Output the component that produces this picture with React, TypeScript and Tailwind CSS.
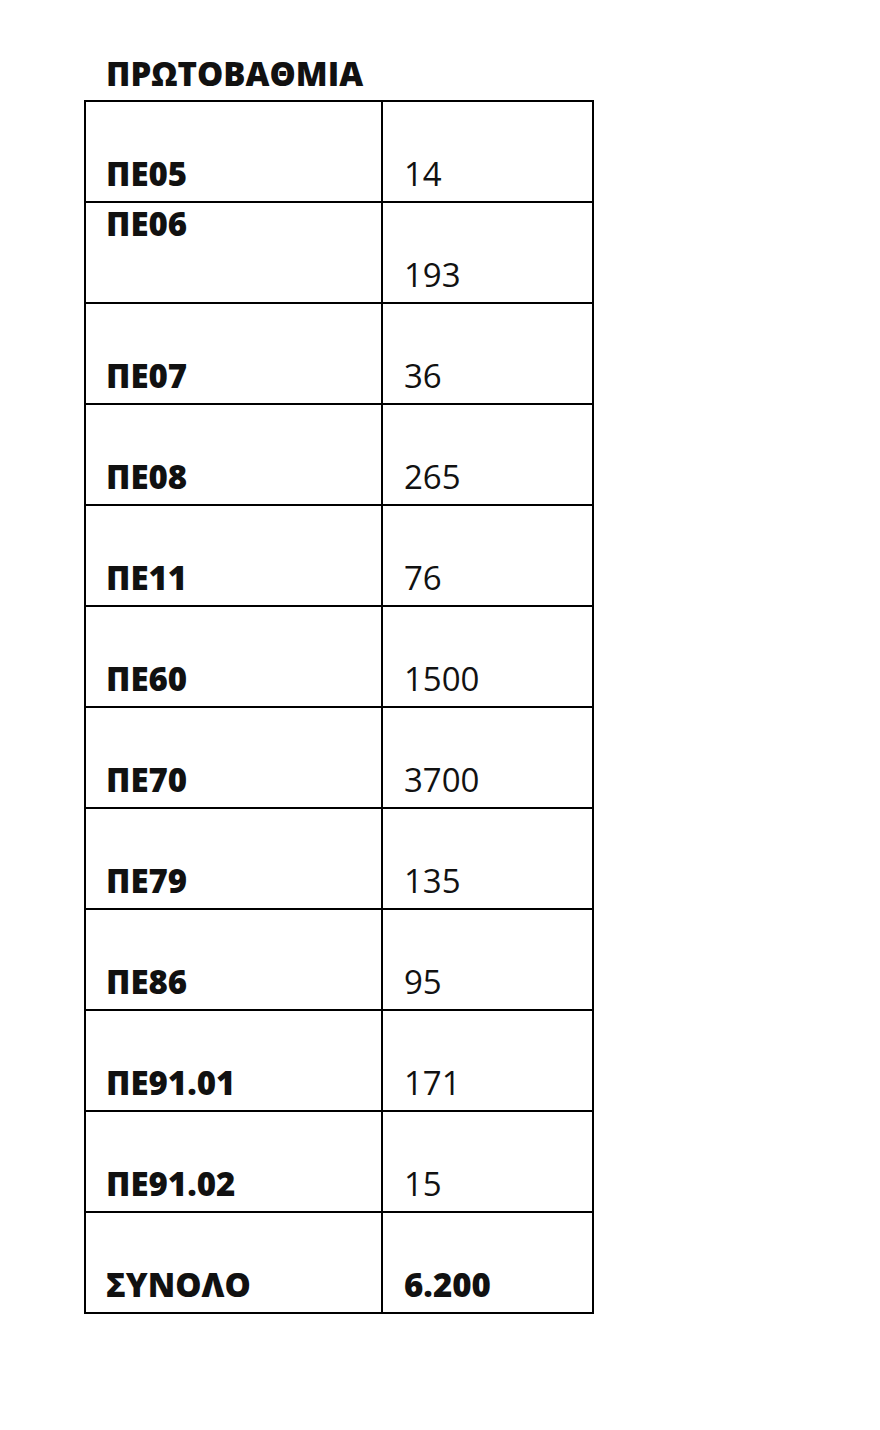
import * as React from "react";

const rows: { code: string; value: string; split?: boolean; total?: boolean }[] = [
  { code: "ΠΕ05", value: "14" },
  { code: "ΠΕ06", value: "193", split: true },
  { code: "ΠΕ07", value: "36" },
  { code: "ΠΕ08", value: "265" },
  { code: "ΠΕ11", value: "76" },
  { code: "ΠΕ60", value: "1500" },
  { code: "ΠΕ70", value: "3700" },
  { code: "ΠΕ79", value: "135" },
  { code: "ΠΕ86", value: "95" },
  { code: "ΠΕ91.01", value: "171" },
  { code: "ΠΕ91.02", value: "15" },
  { code: "ΣΥΝΟΛΟ", value: "6.200", total: true },
];

export default function App() {
  return (
    <div className="h-[1430px] w-[880px] bg-white text-[#111] [font-family:'Open_Sans',sans-serif]">
      <div className="pl-[106px] pt-[56px] text-[33px] font-extrabold leading-[36px]">ΠΡΩΤΟΒΑΘΜΙΑ</div>
      <div className="ml-[84px] mt-[8px] w-[510px] border-2 border-b-0 border-black">
        {rows.map((row) => (
          <div key={row.code} className="flex h-[101px] border-b-2 border-black">
            <div className={`flex w-[297px] shrink-0 border-r-2 border-black pl-[20px] ${row.split ? "items-start pt-[3px]" : "items-end pb-[9px]"}`}>
              <span className="text-[33px] font-extrabold leading-[36px]">{row.code}</span>
            </div>
            <div className="flex flex-1 items-end pb-[9px] pl-[21px]">
              <span className={`text-[33px] leading-[36px] ${row.total ? "font-extrabold" : ""}`}>{row.value}</span>
            </div>
          </div>
        ))}
      </div>
    </div>
  );
}
